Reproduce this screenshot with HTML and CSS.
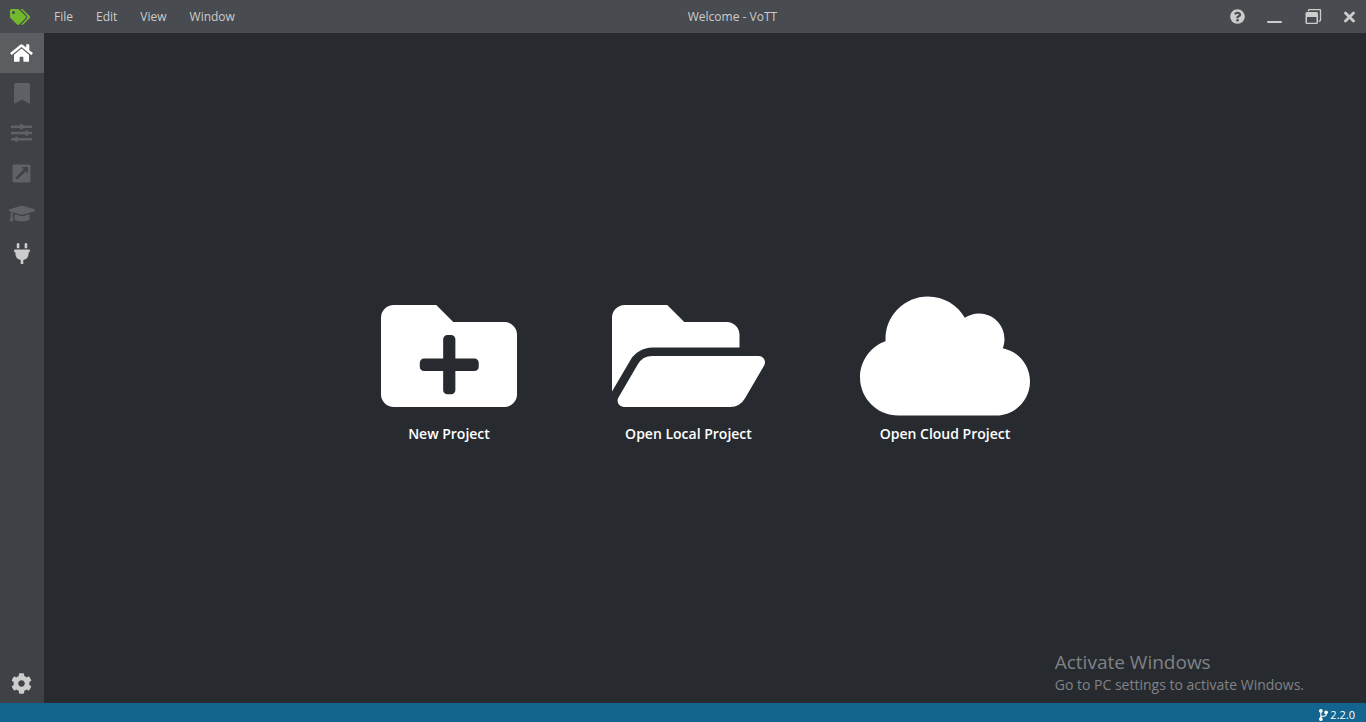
FILE: index.html
```html
<!DOCTYPE html>
<html lang="en">
<head>
<meta charset="utf-8">
<title>Welcome - VoTT</title>
<link rel="stylesheet" href="styles.css">
</head>
<body>
<div class="app">
  <header class="titlebar">
    <svg class="logo" viewBox="0 0 640 512" aria-hidden="true"><path d="M497.941 225.941L286.059 14.059A48 48 0 0 0 252.118 0H48C21.49 0 0 21.49 0 48v204.118a48 48 0 0 0 14.059 33.941l211.882 211.882c18.744 18.745 49.136 18.746 67.882 0l204.118-204.118c18.745-18.745 18.745-49.137 0-67.882zM112 160c-26.51 0-48-21.49-48-48s21.49-48 48-48 48 21.49 48 48-21.49 48-48 48zm513.941 133.823L421.823 497.941c-18.745 18.745-49.137 18.745-67.882 0l-.36-.36L527.64 323.522c16.999-16.999 26.36-39.6 26.36-63.64s-9.362-46.641-26.36-63.64L331.397 0h48.721a48 48 0 0 1 33.941 14.059l211.882 211.882c18.745 18.745 18.745 49.137 0 67.882z"/></svg>
    <nav class="menu" aria-label="Main menu">
      <button type="button">File</button>
      <button type="button">Edit</button>
      <button type="button">View</button>
      <button type="button">Window</button>
    </nav>
    <div class="title">Welcome - VoTT</div>
    <div class="controls">
      <button type="button" aria-label="Help"><svg width="15" height="15" viewBox="0 0 512 512"><path d="M504 256c0 136.997-111.043 248-248 248S8 392.997 8 256C8 119.083 119.043 8 256 8s248 111.083 248 248zM262.655 90c-54.497 0-89.255 22.957-116.549 63.758-3.536 5.286-2.353 12.415 2.715 16.258l34.699 26.31c5.205 3.947 12.621 3.008 16.665-2.122 17.864-22.658 30.113-35.797 57.303-35.797 20.429 0 45.698 13.148 45.698 32.958 0 14.976-12.363 22.667-32.534 33.976C247.128 238.528 216 254.941 216 296v4c0 6.627 5.373 12 12 12h56c6.627 0 12-5.373 12-12v-1.333c0-28.462 83.186-29.647 83.186-106.667 0-58.002-60.165-102-116.531-102zM256 338c-25.365 0-46 20.635-46 46 0 25.364 20.635 46 46 46s46-20.636 46-46c0-25.364-20.635-46-46-46z"/></svg></button>
      <button type="button" aria-label="Minimize"><svg width="15" height="15" viewBox="0 0 15 15"><rect y="12" width="15" height="2" rx="1"/></svg></button>
      <button type="button" aria-label="Restore"><svg width="18" height="15" viewBox="-1 0 18 15"><path fill-rule="evenodd" d="M2 3h9.500a1.500 1.500 0 0 1 1.500 1.500v9a1.500 1.500 0 0 1-1.500 1.500h-9.500a1.500 1.500 0 0 1-1.500-1.500v-9a1.500 1.500 0 0 1 1.500-1.500zM2 8v5.700h9.500V8z"/><path d="M3.500 2.200V1.500a1 1 0 0 1 1-1H14.500a1 1 0 0 1 1 1V11a1 1 0 0 1-1 1h-.8" fill="none" stroke="currentColor" stroke-width="1.300"/></svg></button>
      <button type="button" aria-label="Close"><svg width="11" height="12" viewBox="0 0 11 12"><path d="M1.500 2l8 8M9.500 2l-8 8" fill="none" stroke="currentColor" stroke-width="2.800" stroke-linecap="round"/></svg></button>
    </div>
  </header>

  <div class="body">
    <nav class="sidebar" aria-label="Pages">
      <button type="button" class="side-item active" aria-label="Welcome"><svg width="23" height="20" viewBox="0 0 576 512"><path d="M280.370 148.260L96 300.110V464a16 16 0 0 0 16 16l112.060-.29a16 16 0 0 0 15.920-16V368a16 16 0 0 1 16-16h64a16 16 0 0 1 16 16v95.640a16 16 0 0 0 16 16.050L464 480a16 16 0 0 0 16-16V300L295.670 148.260a12.190 12.190 0 0 0-15.300 0zM571.600 251.470L488 182.560V44.050a12 12 0 0 0-12-12h-56a12 12 0 0 0-12 12v72.610L318.470 43a48 48 0 0 0-61 0L4.340 251.470a12 12 0 0 0-1.600 16.900l25.500 31A12 12 0 0 0 45.150 301l235.220-193.740a12.190 12.190 0 0 1 15.300 0L530.900 301a12 12 0 0 0 16.900-1.600l25.500-31a12 12 0 0 0-1.700-16.930z"/></svg></button>
      <button type="button" class="side-item" disabled aria-label="Tag editor"><svg width="16" height="21" viewBox="0 0 384 512"><path d="M0 512V48C0 21.490 21.490 0 48 0h288c26.510 0 48 21.490 48 48v464L192 400 0 512z"/></svg></button>
      <button type="button" class="side-item" disabled aria-label="Project settings"><svg width="21" height="18" viewBox="0 0 21 18"><rect y="1.500" width="21" height="2.600" rx=".6"/><rect x="9" y=".3" width="3" height="5" rx=".6"/><rect y="7.700" width="21" height="2.600" rx=".6"/><rect x="14.200" y="6.500" width="3" height="5" rx=".6"/><rect y="13.900" width="21" height="2.600" rx=".6"/><rect x="4" y="12.700" width="3" height="5" rx=".6"/></svg></button>
      <button type="button" class="side-item" disabled aria-label="Export"><svg width="19" height="19" viewBox="0 0 19 19"><path fill-rule="evenodd" d="M2 .5h15A1.500 1.500 0 0 1 18.500 2v15a1.500 1.500 0 0 1-1.500 1.500H2A1.500 1.500 0 0 1 .5 17V2A1.500 1.500 0 0 1 2 .5zM9.500 3l2.300 2.300-8.400 8.400 1.900 1.900 8.400-8.400 2.300 2.300V3z"/></svg></button>
      <button type="button" class="side-item" disabled aria-label="Active learning"><svg width="26" height="21" viewBox="0 0 640 512"><path d="M622.340 153.200L343.400 67.500c-15.200-4.670-31.600-4.670-46.790 0L17.660 153.200c-23.540 7.230-23.540 38.360 0 45.590l48.630 14.940c-10.670 13.190-17.230 29.280-17.880 46.900C38.780 266.150 32 276.110 32 288c0 10.780 5.680 19.850 13.860 25.650L20.330 428.530C18.110 438.520 25.710 448 35.940 448h56.110c10.240 0 17.840-9.480 15.620-19.470L82.140 313.650C90.320 307.850 96 298.780 96 288c0-11.570-6.470-21.250-15.660-26.870.76-15.020 8.440-28.300 20.690-36.720L296.600 284.500c9.060 2.780 26.440 6.250 46.790 0l278.950-85.700c23.550-7.240 23.550-38.360 0-45.600zM352.790 315.090c-28.530 8.760-52.840 3.920-65.590 0l-145.020-44.550L128 384c0 35.350 85.960 64 192 64s192-28.650 192-64l-14.180-113.470-145.030 44.560z"/></svg></button>
      <button type="button" class="side-item" aria-label="Connections"><svg width="16" height="21" viewBox="0 0 384 512"><path d="M320,32a32,32,0,0,0-64,0v96h64Zm48,128H16A16,16,0,0,0,0,176v32a16,16,0,0,0,16,16H32v32A160.070,160.070,0,0,0,160,412.800V512h64V412.800A160.070,160.070,0,0,0,352,256V224h16a16,16,0,0,0,16-16V176A16,16,0,0,0,368,160ZM128,32a32,32,0,0,0-64,0v96h64Z"/></svg></button>
      <button type="button" class="side-item bottom" aria-label="Application settings"><svg width="21" height="21" viewBox="0 0 512 512"><path d="M487.400 315.700l-42.600-24.600c4.300-23.200 4.300-47 0-70.200l42.600-24.600c4.900-2.800 7.100-8.600 5.500-14-11.100-35.600-30-67.800-54.700-94.600-3.800-4.100-10-5.100-14.800-2.300L380.800 110c-17.900-15.400-38.500-27.300-60.800-35.100V25.800c0-5.600-3.900-10.500-9.400-11.700-36.700-8.200-74.300-7.800-109.200 0-5.500 1.200-9.400 6.100-9.400 11.700V75c-22.200 7.900-42.800 19.800-60.800 35.100L88.700 85.500c-4.900-2.800-11-1.900-14.800 2.300-24.700 26.700-43.600 58.900-54.700 94.600-1.700 5.400.6 11.200 5.500 14L67.300 221c-4.300 23.200-4.300 47 0 70.200l-42.600 24.600c-4.900 2.800-7.100 8.600-5.500 14 11.100 35.600 30 67.800 54.700 94.600 3.800 4.100 10 5.100 14.800 2.300l42.600-24.600c17.900 15.400 38.500 27.300 60.800 35.100v49.200c0 5.600 3.900 10.500 9.400 11.700 36.700 8.200 74.300 7.800 109.200 0 5.500-1.200 9.400-6.100 9.400-11.700v-49.200c22.200-7.900 42.800-19.800 60.800-35.100l42.600 24.600c4.900 2.800 11 1.900 14.800-2.300 24.700-26.700 43.600-58.900 54.700-94.600 1.500-5.500-.7-11.300-5.600-14.100zM256 336c-44.100 0-80-35.900-80-80s35.900-80 80-80 80 35.900 80 80-35.900 80-80 80z"/></svg></button>
    </nav>

    <main class="content">
      <a class="tile" href="#new">
        <svg width="136" height="136" viewBox="0 0 512 512" aria-hidden="true"><path fill-rule="evenodd" d="M464 128H272L208 64H48A48 48 0 0 0 0 112V400a48 48 0 0 0 48 48H464a48 48 0 0 0 48-48V176A48 48 0 0 0 464 128zM368 296a16 16 0 0 1-16 16h-72v72a16 16 0 0 1-16 16h-14a16 16 0 0 1-16-16v-72h-72a16 16 0 0 1-16-16v-15a16 16 0 0 1 16-16h72v-72a16 16 0 0 1 16-16h14a16 16 0 0 1 16 16v72h72a16 16 0 0 1 16 16z"/></svg>
        <span>New Project</span>
      </a>
      <a class="tile" href="#open-local">
        <svg width="153" height="136" viewBox="0 0 576 512" aria-hidden="true"><path d="M572.694 292.093L500.270 416.248A63.997 63.997 0 0 1 444.989 448H45.025c-18.523 0-30.064-20.093-20.731-36.093l72.424-124.155A64 64 0 0 1 152 256h399.964c18.523 0 30.064 20.093 20.730 36.093zM152 224h328v-48c0-26.510-21.490-48-48-48H272l-64-64H48C21.490 64 0 85.490 0 112v278.046l69.077-118.418C86.214 242.250 117.989 224 152 224z"/></svg>
        <span>Open Local Project</span>
      </a>
      <a class="tile" href="#open-cloud">
        <svg width="170" height="136" viewBox="0 0 640 512" aria-hidden="true"><path d="M537.600 226.600c4.100-10.700 6.400-22.400 6.400-34.600 0-53-43-96-96-96-19.700 0-38.100 6-53.300 16.200C367 64.200 315.300 32 256 32c-88.400 0-160 71.600-160 160 0 2.700.1 5.400.2 8.100C40.200 219.800 0 273.200 0 336c0 79.500 64.500 144 144 144h368c70.700 0 128-57.300 128-128 0-61.900-44-113.600-102.400-125.400z"/></svg>
        <span>Open Cloud Project</span>
      </a>
    </main>
  </div>

  <footer class="statusbar">
    <svg width="9" height="12" viewBox="0 0 384 512" aria-hidden="true"><path d="M384 144c0-44.200-35.800-80-80-80s-80 35.800-80 80c0 36.400 24.300 67.100 57.500 76.800-.6 16.100-4.200 28.500-11 36.900-15.400 19.200-49.300 22.400-85.200 25.700-28.200 2.600-57.400 5.400-81.300 16.900v-144c32.500-10.200 56-40.500 56-76.300 0-44.200-35.800-80-80-80S0 35.800 0 80c0 35.800 23.500 66.100 56 76.300v199.300C23.500 365.900 0 396.200 0 432c0 44.200 35.800 80 80 80s80-35.800 80-80c0-34-21.200-63.100-51.200-74.600 3.100-5.200 7.800-9.800 14.900-13.400 16.200-8.200 40.400-10.400 66.100-12.800 42.200-3.900 90-8.400 118.200-43.400 14-17.400 21.100-39.800 21.600-67.900 31.600-10.800 54.400-40.700 54.400-75.900z"/></svg>
    <span>2.2.0</span>
  </footer>

  <aside class="watermark">
    <div class="watermark-title">Activate Windows</div>
    <div class="watermark-text">Go to PC settings to activate Windows.</div>
  </aside>
</div>
</body>
</html>
```
FILE: styles.css
```css
* {
  box-sizing: border-box;
}

body {
  margin: 0;
  font-family: "Segoe UI", "Open Sans", "Noto Sans", sans-serif;
  font-size: 12px;
  background: #272b30;
  color: #ccc;
}

button {
  margin: 0;
  padding: 0;
  border: 0;
  background: none;
  color: inherit;
  font: inherit;
}

svg {
  display: block;
  fill: currentColor;
}

.app {
  position: relative;
  display: flex;
  flex-direction: column;
  height: 100vh;
}

.titlebar {
  display: flex;
  align-items: center;
  height: 33px;
  background: #484b4f;
}

.logo {
  width: 20px;
  height: 16px;
  margin: 0 13px 0 10px;
  color: #73b92e;
}

.menu,
.controls {
  display: flex;
  align-self: stretch;
}

.menu {
  gap: 1px;
}

.menu button {
  padding: 0 11px;
}

.title {
  flex: 1;
  text-align: center;
}

.controls button {
  display: flex;
  align-items: center;
  padding: 0 11px;
}

.body {
  display: flex;
  flex: 1;
  min-height: 0;
}

.sidebar {
  display: flex;
  flex-direction: column;
  width: 44px;
  background: #3e4145;
}

.side-item {
  display: flex;
  align-items: center;
  justify-content: center;
  height: 40px;
  padding-right: 1px;
}

.side-item:disabled {
  color: #5f6265;
}

.side-item.active {
  background: #5b5e61;
  color: #fff;
}

.side-item.bottom {
  margin-top: auto;
}

.content {
  display: flex;
  flex: 1;
  align-items: center;
  justify-content: center;
  gap: 95px;
  padding: 1px 0 0 1px;
}

.tile {
  display: flex;
  flex-direction: column;
  align-items: center;
  color: #fff;
  font-size: 14px;
  font-weight: 600;
  line-height: 20px;
  text-decoration: none;
}

.tile span {
  padding-bottom: 6px;
}

.statusbar {
  display: flex;
  align-items: flex-end;
  justify-content: flex-end;
  gap: 2px;
  height: 19px;
  padding-right: 11px;
  background: #146490;
  color: #fff;
  font-size: 11px;
  line-height: 14px;
}

.statusbar svg {
  margin-bottom: 1px;
}

.watermark {
  position: absolute;
  right: 62px;
  bottom: 27px;
  color: #808285;
  pointer-events: none;
}

.watermark-title {
  font-size: 19px;
  line-height: 26px;
}

.watermark-text {
  font-size: 14px;
  line-height: 20px;
}
```
